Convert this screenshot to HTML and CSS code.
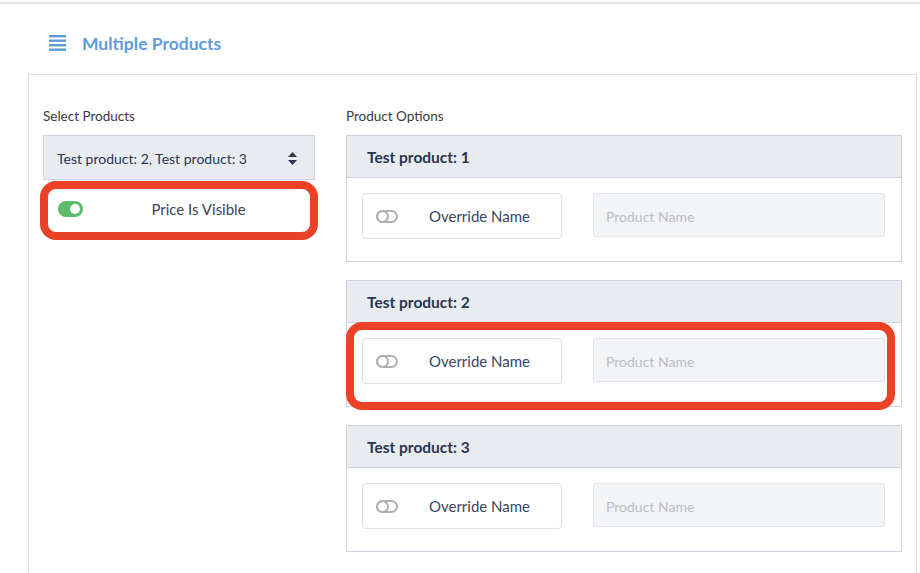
FILE: index.html
```html
<!DOCTYPE html>
<html lang="en">
<head>
    <meta charset="UTF-8">
    <title>Multiple Products</title>
    <link rel="stylesheet" href="styles.css">
</head>
<body>

    <!-- Page Header -->
    <div class="page-header">
        <svg class="list-icon" width="17" height="16" viewBox="0 0 17 16">
            <rect x="0" y="0" width="17" height="2.4" fill="#5b9bd5"/>
            <rect x="0" y="4.5" width="17" height="2.4" fill="#5b9bd5"/>
            <rect x="0" y="9" width="17" height="2.4" fill="#5b9bd5"/>
            <rect x="0" y="13.5" width="17" height="2.4" fill="#5b9bd5"/>
        </svg>
        <h1 class="page-title">Multiple Products</h1>
    </div>

    <!-- Main Card -->
    <div class="card">
        <!-- Left Column -->
        <div class="col-left">
            <div class="field-label">Select Products</div>
            <div class="select-box">
                <span>Test product: 2, Test product: 3</span>
                <svg width="9" height="13" viewBox="0 0 9 13">
                    <path d="M4.5 0 L9 5 L0 5 Z" fill="#2b3650"/>
                    <path d="M4.5 13 L9 8 L0 8 Z" fill="#2b3650"/>
                </svg>
            </div>
            <div class="toggle-box price-box highlight">
                <span class="toggle on"></span>
                <span class="toggle-text">Price Is Visible</span>
            </div>
        </div>

        <!-- Right Column -->
        <div class="col-right">
            <div class="field-label">Product Options</div>

            <div class="panel">
                <div class="panel-head">Test product: 1</div>
                <div class="panel-body">
                    <div class="toggle-box override-box">
                        <span class="toggle"></span>
                        <span class="toggle-text">Override Name</span>
                    </div>
                    <input class="name-input" type="text" placeholder="Product Name">
                </div>
            </div>

            <div class="panel">
                <div class="panel-head">Test product: 2</div>
                <div class="panel-body highlight body-highlight">
                    <div class="toggle-box override-box">
                        <span class="toggle"></span>
                        <span class="toggle-text">Override Name</span>
                    </div>
                    <input class="name-input" type="text" placeholder="Product Name">
                </div>
            </div>

            <div class="panel">
                <div class="panel-head">Test product: 3</div>
                <div class="panel-body">
                    <div class="toggle-box override-box">
                        <span class="toggle"></span>
                        <span class="toggle-text">Override Name</span>
                    </div>
                    <input class="name-input" type="text" placeholder="Product Name">
                </div>
            </div>
        </div>
    </div>

</body>
</html>
```

FILE: styles.css
```css
/* General */
body {
    margin: 0;
    font-family: 'Lato', 'Open Sans', sans-serif;
    background-color: #fff;
    color: #333;
    border-top: 2px solid #e4e4e4;
    margin-top: 2px;
    height: 569px;
    overflow: hidden;
}

/* Header */
.page-header {
    display: flex;
    align-items: center;
    height: 70px;
    padding-top: 8px;
    padding-left: 49px;
    box-sizing: border-box;
}

.list-icon {
    margin-right: 16px;
}

.page-title {
    margin: 0;
    font-size: 17.5px;
    font-weight: 700;
    color: #5f9cd7;
}

/* Main card */
.card {
    margin-left: 28px;
    margin-right: 3px;
    border: 1px solid #dedede;
    border-bottom: none;
    padding: 33px 14px 40px 14px;
    display: grid;
    grid-template-columns: 272px 1fr;
    gap: 31px;
}

.field-label {
    font-size: 13.5px;
    line-height: 16px;
    color: #3a3a3a;
    margin-bottom: 11px;
}

/* Select */
.select-box {
    height: 45px;
    box-sizing: border-box;
    background-color: #e8ecf1;
    border: 1px solid #cdd4dd;
    display: flex;
    align-items: center;
    justify-content: space-between;
    padding: 2px 17px 0 13px;
    font-size: 14px;
    color: #2b3650;
}

/* Toggle boxes */
.toggle-box {
    display: flex;
    align-items: center;
    height: 46px;
    box-sizing: border-box;
    background-color: #fff;
    border: 1px solid #dcdfe3;
    border-radius: 4px;
}

.toggle-text {
    flex: 1;
    text-align: center;
    font-size: 15px;
    color: #3a4560;
}

.toggle {
    width: 22px;
    height: 13px;
    border: 2px solid #b0b0b0;
    border-radius: 9px;
    box-sizing: border-box;
    position: relative;
}

.toggle::after {
    content: '';
    position: absolute;
    left: 0;
    top: 0;
    border: 2px solid #b0b0b0;
    border-radius: 50%;
    box-sizing: border-box;
    margin: -2px 0 0 -2px;
    width: 13px;
    height: 13px;
}

.toggle.on {
    width: 25px;
    height: 16px;
    background-color: #5cba6c;
    border: none;
}

.toggle.on::after {
    left: auto;
    right: 3px;
    top: 3px;
    width: 10px;
    height: 10px;
    margin: 0;
    border: none;
    background-color: #fff;
}

.price-box {
    margin-top: 6px;
    padding-left: 14px;
    border-color: #fff;
}

.override-box {
    width: 200px;
    padding-left: 13px;
    flex-shrink: 0;
}

/* Product panels */
.panel {
    border: 1px solid #cdd4dd;
    margin-bottom: 18px;
}

.panel-head {
    height: 42px;
    box-sizing: border-box;
    background-color: #e8ebf0;
    border-bottom: 1px solid #cdd4dd;
    display: flex;
    align-items: center;
    padding-left: 20px;
    font-size: 15.5px;
    font-weight: 700;
    color: #2b3650;
}

.panel-body {
    display: flex;
    align-items: flex-start;
    gap: 31px;
    padding: 15px 16px 22px 15px;
    background-color: #fff;
}

.name-input {
    flex: 1;
    height: 44px;
    box-sizing: border-box;
    background-color: #f3f4f6;
    border: 1px solid #e0e3e8;
    border-radius: 2px;
    padding: 3px 12px 0 12px;
    font-family: inherit;
    font-size: 14px;
    outline: none;
}

.name-input::placeholder {
    color: #b9bdc4;
}

/* Red annotation outlines */
.highlight {
    position: relative;
}

.highlight::before {
    content: '';
    position: absolute;
    top: -6px;
    left: -4px;
    right: -4px;
    bottom: -9px;
    border: 8px solid #eb4127;
    border-radius: 16px;
    pointer-events: none;
}

.body-highlight::before {
    top: -1px;
    left: -1px;
    right: 6px;
    bottom: -4px;
}
```
